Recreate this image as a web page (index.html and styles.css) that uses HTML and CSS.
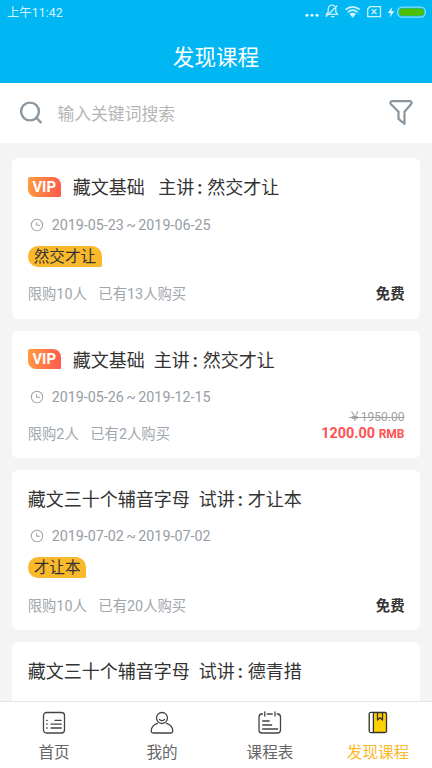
FILE: index.html
```html
<!DOCTYPE html>
<html lang="zh-CN">
<head>
<meta charset="utf-8">
<title>发现课程</title>
<link rel="stylesheet" href="styles.css">
</head>
<body>
<div class="app">
  <div class="status">
    <span class="time">上午11:42</span>
    <svg class="status-icons" width="126" height="20" viewBox="0 0 126 20" fill="none" stroke="#c9f0fd" stroke-width="1.3">
      <g fill="#e0f7ff" stroke="none"><circle cx="7" cy="14.200" r="1.500"/><circle cx="12" cy="14.200" r="1.500"/><circle cx="17" cy="14.200" r="1.500"/></g>
      <path d="M26.500 13.300h11l-1.700-2.300V8a3.800 3.800 0 0 0-7.600 0v3zM31 15.700h3.500M37.500 4.500 25.800 15.800"/>
      <path d="M45.500 8.700c4.300-3.700 10-3.700 14.300 0M47.800 11.300c2.900-2.500 6.800-2.500 9.700 0" stroke-width="1.700"/>
      <path d="M49.500 13.100a4.800 4.800 0 0 1 6.300 0l-3.100 3.700z" fill="#d9f5ff" stroke="none"/>
      <path d="M69.800 5.700h10.700v9.900H67.700V8zM71.700 8.200l4.800 4.800m0-4.800-4.800 4.800"/>
      <path d="M92.200 6 87.800 12h3L89.700 16.500l4.600-6.300h-3z" fill="#e0f7ff" stroke="none"/>
      <rect x="97.700" y="6.100" width="27.600" height="10" rx="4.600" stroke="#8bddf8"/><rect x="99" y="7.400" width="25" height="7.400" rx="3.500" fill="#4cbf00" stroke="none"/>
    </svg>
  </div>
  <header class="header">发现课程</header>
  <div class="search">
    <svg width="24" height="24" viewBox="0 0 24 24" fill="none" stroke="#8c98a2" stroke-width="2.400" stroke-linecap="round"><circle cx="11" cy="10.500" r="8.900"/><path d="m17.500 17 4.300 4.300"/></svg>
    <span class="placeholder">输入关键词搜索</span>
    <svg width="26" height="26" viewBox="0 0 26 26" fill="none" stroke="#8a959e" stroke-width="2.200" stroke-linejoin="round"><path d="M3.500 1.200h19q2.200 1 .5 3l-6.500 7.600v12l-6-4.900v-7.100L3 4.200Q1.300 2.200 3.500 1.200z"/></svg>
  </div>
  <main class="list">
    <article class="card">
      <h2 class="title"><span class="vip">VIP</span><span>藏文基础</span><span class="lecturer wide">主讲<b class="colon">:</b>然交才让</span></h2>
      <div class="date"><svg class="clock" viewBox="0 0 14 14"><circle cx="7" cy="7" r="5.700"/><path d="M6.700 4.200v3h3.500"/></svg>2019-05-23 ~ 2019-06-25</div>
      <div class="tags"><span class="tag">然交才让</span></div>
      <div class="meta"><span>限购10人</span><span>已有13人购买</span><strong class="free">免费</strong></div>
    </article>
    <article class="card short">
      <h2 class="title"><span class="vip">VIP</span><span>藏文基础</span><span class="lecturer">主讲<b class="colon">:</b>然交才让</span></h2>
      <div class="date"><svg class="clock" viewBox="0 0 14 14"><circle cx="7" cy="7" r="5.700"/><path d="M6.700 4.200v3h3.500"/></svg>2019-05-26 ~ 2019-12-15</div>
      <div class="meta"><span>限购2人</span><span>已有2人购买</span><div class="price"><s>￥1950.00</s><strong>1200.00 <small>RMB</small></strong></div></div>
    </article>
    <article class="card">
      <h2 class="title"><span>藏文三十个辅音字母</span><span class="lecturer">试讲<b class="colon">:</b>才让本</span></h2>
      <div class="date"><svg class="clock" viewBox="0 0 14 14"><circle cx="7" cy="7" r="5.700"/><path d="M6.700 4.200v3h3.500"/></svg>2019-07-02 ~ 2019-07-02</div>
      <div class="tags"><span class="tag">才让本</span></div>
      <div class="meta"><span>限购10人</span><span>已有20人购买</span><strong class="free">免费</strong></div>
    </article>
    <article class="card">
      <h2 class="title"><span>藏文三十个辅音字母</span><span class="lecturer">试讲<b class="colon">:</b>德青措</span></h2>
    </article>
  </main>
  <nav class="nav">
    <a class="item"><svg viewBox="0 0 24 24"><rect x="1.500" y="1.500" width="21" height="20.500" rx="3"/><path d="M13 9.400h6M9 13.200h10.200M9 17h10.200M4.700 9.400h.5M4.700 13.200h.5M4.700 17h.5"/></svg>首页</a>
    <a class="item"><svg viewBox="0 0 24 24"><circle cx="12" cy="7" r="5.500"/><path d="M9.500 8.500q2.500 2.200 5 0M7.500 12.300C4 13.500 1.500 16 1.200 19.500q-.2 2.500 2.300 2.500h17q2.500 0 2.300-2.500C22.500 16 20 13.500 16.500 12.300"/></svg>我的</a>
    <a class="item"><svg viewBox="0 0 24 24"><path d="M4.500 3H3.700Q1 3.300 1 6v13q0 3 3 3h15.500q3 0 3-3V6q0-2.700-2.700-3h-.6M9.300 3h5M6.800 1v4M17 1v4M4.700 10h6.500M4.700 14h9M4.700 18h15"/></svg>课程表</a>
    <a class="item active"><svg viewBox="0 0 24 24"><rect x="3.200" y="1.500" width="17.300" height="20" rx="1.500" fill="#ffd100"/><path d="M4 2h3v19H4z" fill="#fff" stroke="none"/><path d="M7.400 1.500v20M11.500 1.500v7.500l2.500-2.300L16.500 9V1.500"/></svg>发现课程</a>
  </nav>
</div>
</body>
</html>
```
FILE: styles.css
```css
* { box-sizing: border-box; }
body { margin: 0; font-family: Roboto, "Noto Sans CJK SC", sans-serif; color: #333; }
.app { width: 432px; height: 768px; display: flex; flex-direction: column; overflow: hidden; background: #f4f4f4; white-space: nowrap; }
.status { flex: none; height: 32px; display: flex; justify-content: space-between; padding: 0 6px 0 7px; background: #00b7f3; }
.time { font-size: 12.200px; line-height: 26px; color: #d5f4ff; letter-spacing: .15px; }
.status-icons { flex: none; margin-top: 1px; }
.header { flex: none; height: 51px; background: #00b7f3; color: #fff; text-align: center; font-size: 21.600px; line-height: 52px; }
.search { flex: none; height: 60px; background: #fff; display: flex; align-items: center; padding: 0 18px 0 19px; }
.placeholder { flex: 1; margin-left: 14.500px; font-size: 16.800px; color: #b5b5b5; }
.list { flex: 1; min-height: 0; overflow: hidden; padding: 15.400px 12px 0; display: flex; flex-direction: column; gap: 12px; }
.card { flex: none; height: 160.400px; border-radius: 6px; background: #fff; padding: 14px 15.500px 0 15.700px; }
.card.short { height: 127.200px; }
.title { margin: 0; height: 30px; display: flex; align-items: center; font-size: 18px; font-weight: 400; line-height: 30px; padding-top: 1.500px; }
.vip { width: 33px; height: 20px; margin: -3px 12px 0 0; border-radius: 2px 8px 1px 8px; background: linear-gradient(100deg, #ff9c3c, #ff594f); color: #fff; font-size: 14.800px; font-weight: 700; line-height: 21px; text-align: center; }
.lecturer { margin-left: 9px; display: flex; }
.lecturer.wide { margin-left: 13.500px; }
.colon { width: 13px; padding-left: 3px; font-weight: 700; }
.date { display: flex; align-items: center; height: 20px; margin-top: 12.500px; font-size: 14.300px; word-spacing: -1.200px; color: #969da4; }
.clock { width: 14px; height: 14px; margin: 0 8px 0 2px; fill: none; stroke: #a1a7ad; stroke-width: 1.100; }
.tags { height: 21px; margin: 11px 0 5px; display: flex; }
.tag { height: 21px; padding: 0 6px; border-radius: 10px 10px 1px 10px; background: #fab92b; font-size: 15.600px; line-height: 23px; }
.meta { display: flex; align-items: center; height: 42px; gap: 11.500px; font-size: 14.350px; color: #a0a6ac; }
.short .meta { margin-top: 4.500px; }
.free { margin-left: auto; color: #333; font-weight: 700; }
.price { margin-left: auto; display: flex; flex-direction: column; align-items: flex-end; line-height: 17px; margin-top: -12px; }
.price s { font-size: 12px; line-height: 15px; color: #a0a0a0; }
.price strong { color: #ff5252; font-size: 14.400px; }
.price small { font-size: 12px; }
.nav { flex: none; height: 67px; display: flex; background: #fff; border-top: 1px solid #e5e5e5; }
.item { flex: 1; display: flex; flex-direction: column; align-items: center; padding-top: 9px; font-size: 15.600px; line-height: 20px; color: #666; }
.item svg { width: 24px; height: 24px; margin-bottom: 8px; fill: none; stroke: #444; stroke-width: 1.300; stroke-linecap: round; stroke-linejoin: round; }
.item.active { color: #fab92b; }
.active svg { stroke: #333; }
```
